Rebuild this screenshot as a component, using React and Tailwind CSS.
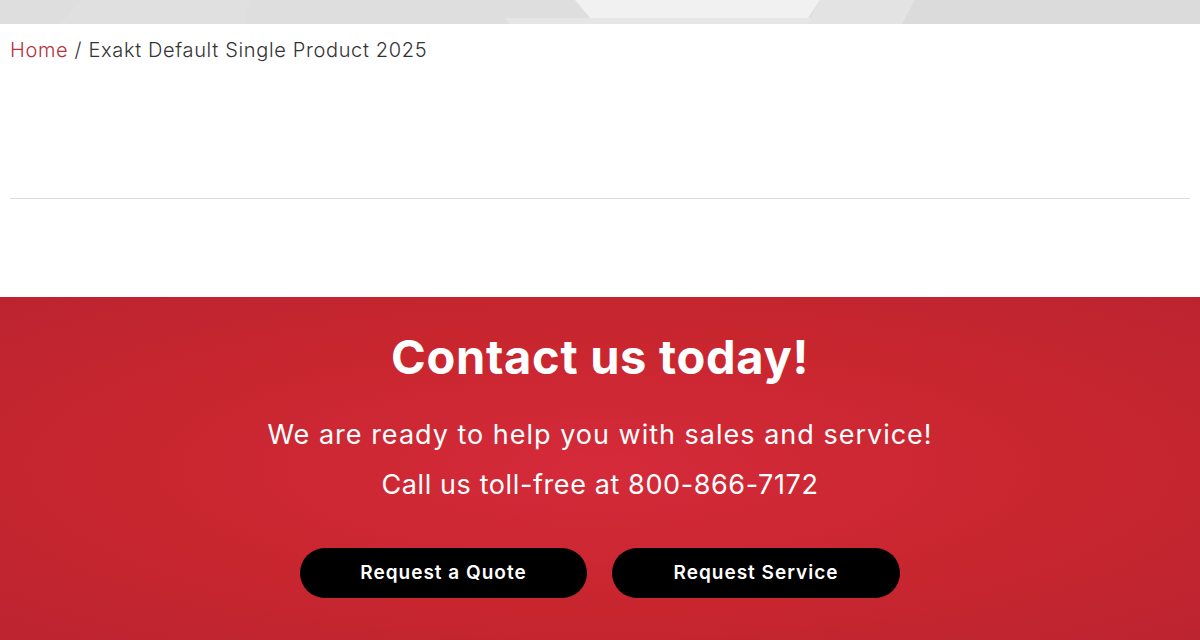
export default function App() {
    return (
        <div className="min-h-[640px] w-full bg-white font-['Inter','Open_Sans',sans-serif]">
            {/* hero image tail */}
            <div className="h-[24px] w-full bg-[#dedede] overflow-hidden">
                <svg width="1200" height="24" viewBox="0 0 1200 24" preserveAspectRatio="none">
                    <polygon points="80,0 250,0 245,24 60,24" fill="#e0e0e0" />
                    <polygon points="575,0 820,0 808,18 590,18" fill="#f1f1f1" />
                    <polygon points="505,18 905,18 900,24 510,24" fill="#e6e6e6" />
                    <polygon points="820,0 915,0 902,24 808,24" fill="#e3e3e3" />
                    <polygon points="915,0 1200,0 1200,24 902,24" fill="#dbdbdb" />
                </svg>
            </div>

            {/* breadcrumb */}
            <div className="px-[10px] pt-[13px] h-[174px] text-[20px] leading-[26px] font-light tracking-[0.65px] text-[#333]">
                <a href="#" className="text-[#b3333c]">Home</a>
                <span> / Exakt Default Single Product 2025</span>
            </div>

            <div className="mx-[10px] h-px bg-[#dcdcdc]" />

            <div className="h-[98px]" />

            {/* contact band */}
            <section className="h-[343px] bg-[radial-gradient(ellipse_at_center,#d52a3a_0%,#c8262f_55%,#bc2430_100%)] pt-[30px] text-center text-white">
                <h2 className="text-[47px] leading-[60px] font-bold tracking-[0.7px]">Contact us today!</h2>
                <p className="mt-[23px] text-[27px] leading-[50px] tracking-[1px]">We are ready to help you with sales and service!</p>
                <p className="text-[27px] leading-[50px] tracking-[0.6px]">Call us toll-free at 800-866-7172</p>
                <div className="mt-[38px] flex justify-center gap-[25px]">
                    <button className="h-[50px] w-[287px] rounded-full bg-black text-[19px] font-semibold tracking-[1px] text-white">
                        Request a Quote
                    </button>
                    <button className="h-[50px] w-[288px] rounded-full bg-black text-[19px] font-semibold tracking-[1px] text-white">
                        Request Service
                    </button>
                </div>
            </section>
        </div>
    );
}
